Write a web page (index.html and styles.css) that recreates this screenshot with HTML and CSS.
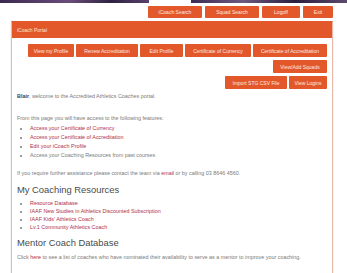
FILE: index.html
```html
<!DOCTYPE html>
<html lang="en">
<head>
    <meta charset="UTF-8">
    <title>iCoach Portal</title>
    <link rel="stylesheet" href="styles.css">
</head>
<body>

<div class="banner"></div>

<div class="topnav">
    <a class="btn w54">iCoach Search</a>
    <a class="btn w54">Squad Search</a>
    <a class="btn w38">Logoff</a>
    <a class="btn w30">Exit</a>
</div>

<div class="panel">
    <div class="panel-heading">iCoach Portal</div>
    <div class="panel-body">
        <div class="btnrow">
            <a class="btn w46">View my Profile</a>
            <a class="btn w62">Renew Accreditation</a>
            <a class="btn w43">Edit Profile</a>
            <a class="btn w66">Certificate of Currency</a>
            <a class="btn w74">Certificate of Accreditation</a>
        </div>
        <div class="btnrow">
            <a class="btn w54">View/Add Squads</a>
        </div>
        <div class="btnrow">
            <a class="btn w62">Import STG CSV File</a>
            <a class="btn w38">View Logins</a>
        </div>

        <p class="welcome"><b>Blair</b>, welcome to the Accredited Athletics Coaches portal.</p>

        <p class="intro">From this page you will have access to the following features:</p>
        <ul class="features">
            <li><a href="#">Access your Certificate of Currency</a></li>
            <li><a href="#">Access your Certificate of Accreditation</a></li>
            <li><a href="#">Edit your iCoach Profile</a></li>
            <li>Access your Coaching Resources from past courses</li>
        </ul>

        <p class="help">If you require further assistance please contact the team via <a href="#">email</a> or by calling 03 8646 4560.</p>

        <h3>My Coaching Resources</h3>
        <ul class="resources">
            <li><a href="#">Resource Database</a></li>
            <li><a href="#">IAAF New Studies in Athletics Discounted Subscription</a></li>
            <li><a href="#">IAAF Kids' Athletics Coach</a></li>
            <li><a href="#">Lv.1 Community Athletics Coach</a></li>
        </ul>

        <h3>Mentor Coach Database</h3>
        <p class="mentor">Click <a href="#">here</a> to see a list of coaches who have nominated their availability to serve as a mentor to improve your coaching.</p>
    </div>
</div>

</body>
</html>
```

FILE: styles.css
```css
body {
    margin: 0;
    font-family: "Liberation Sans", Arial, sans-serif;
    font-size: 5.4px;
    color: #7a7a7a;
    background: #fff;
}

a {
    color: #b0304a;
    text-decoration: none;
}

li::marker {
    color: #7a7a7a;
}

.banner {
    height: 3px;
    background: linear-gradient(to right, #3b2a52 0, #6a4c7a 20%, #2e2340 32%, #5a4070 43%, #fff 43%, #fff 55%, #3a2c55 55%, #6d5a80 70%, #2a2040 85%, #5c4a6c 100%);
}

.topnav {
    display: flex;
    justify-content: flex-end;
    gap: 3px;
    width: 333px;
    margin-top: 3px;
}

.btn {
    display: flex;
    align-items: center;
    justify-content: center;
    height: 13px;
    background: #e2582b;
    color: #fde9e0;
    border-radius: 1px;
    font-size: 5px;
    white-space: nowrap;
}

.topnav .btn {
    height: 12px;
}

.w30 { width: 30px; }
.w38 { width: 38px; }
.w43 { width: 43px; }
.w46 { width: 46px; }
.w54 { width: 54px; }
.w62 { width: 62px; }
.w66 { width: 66px; }
.w74 { width: 74px; }

.panel {
    margin: 3px 0 0 11px;
    width: 320px;
    border: 1px solid #e7b9a8;
    border-top-color: #e2582b;
    box-shadow: 0 1px 2px rgba(120, 60, 40, 0.15);
}

.panel-heading {
    height: 16px;
    line-height: 16px;
    background: #e2582b;
    color: #fbe3d8;
    padding: 0 5px;
    font-size: 5px;
}

.panel-body {
    padding: 6px 5px 12px 5px;
}

.btnrow {
    display: flex;
    justify-content: flex-end;
    gap: 2px;
    margin-bottom: 3px;
}

p {
    margin: 0;
    line-height: 9px;
}

b {
    color: #444;
}

.intro {
    margin-top: 13px;
}

ul {
    margin: 1px 0 0 0;
    padding-left: 13px;
}

.features li {
    line-height: 9px;
}

.help {
    margin-top: 9px;
}

h3 {
    margin: 6px 0 0 0;
    font-weight: normal;
    font-size: 9.4px;
    line-height: 12px;
    color: #4a4a4a;
}

.resources {
    margin-top: 3px;
}

.resources li {
    line-height: 8px;
}

.mentor {
    margin-top: 4px;
}
```
